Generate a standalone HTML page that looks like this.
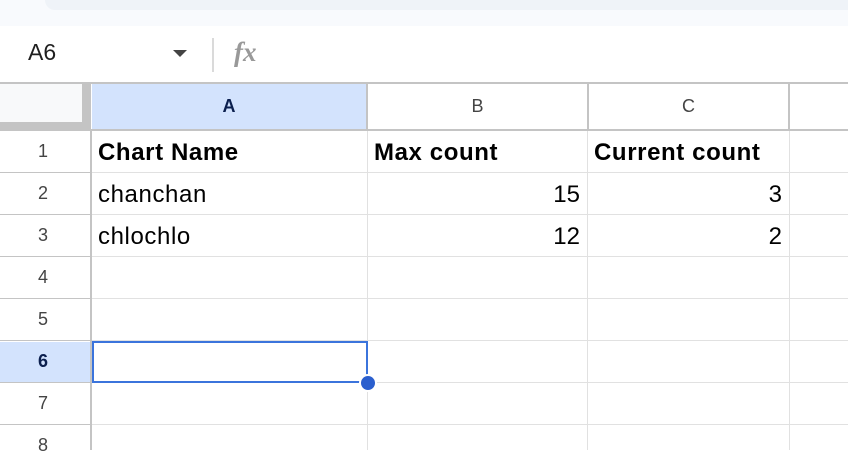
<!DOCTYPE html>
<html><head><style>
*{margin:0;padding:0;box-sizing:border-box}
body{width:848px;height:450px;overflow:hidden;background:#fff;font-family:"Liberation Sans",Arial,sans-serif;position:relative}
.a{position:absolute}
.vl{position:absolute;width:1px;background:#e1e1e1}
.hl{position:absolute;height:1px;background:#e1e1e1}
.rn{position:absolute;left:0;width:86px;text-align:center;font-size:18px;color:#444}
.ch{position:absolute;top:83px;height:47px;line-height:47px;text-align:center;font-size:18px;color:#444}
.t{position:absolute;font-size:24px;letter-spacing:0.6px;color:#000}
</style></head><body>
<div class="a" style="left:0;top:0;width:848px;height:26px;background:#f8fafd"></div>
<div class="a" style="left:45px;top:0;width:803px;height:10px;background:#eff3f8;border-bottom-left-radius:10px"></div>
<div class="a" style="left:28px;top:39px;font-size:23px;color:#1f1f1f">A6</div>
<div class="a" style="left:173px;top:50px;width:0;height:0;border-left:7px solid transparent;border-right:7px solid transparent;border-top:7px solid #444"></div>
<div class="a" style="left:212px;top:38px;width:2px;height:34px;background:#dadada"></div>
<div class="a" style="left:234px;top:37px;font-size:27px;font-style:italic;font-weight:bold;font-family:'Liberation Serif',serif;color:#999">fx</div>
<div class="hl" style="left:0;top:82px;width:848px;height:2px;background:#c4c4c4"></div>
<div class="a" style="left:0;top:84px;width:82px;height:38px;background:#f8f9fa"></div>
<div class="a" style="left:82px;top:84px;width:9px;height:46px;background:#c4c4c4"></div>
<div class="a" style="left:0;top:122px;width:91px;height:8px;background:#c4c4c4"></div>
<div class="a" style="left:92px;top:84px;width:275px;height:46px;background:#d3e3fd"></div>
<div class="hl" style="left:0;top:129px;width:848px;height:2px;background:#c4c4c4"></div>
<div class="vl" style="left:366px;top:84px;height:46px;width:2px;background:#c4c4c4"></div>
<div class="vl" style="left:587px;top:84px;height:46px;width:2px;background:#c4c4c4"></div>
<div class="vl" style="left:788px;top:84px;height:46px;width:2px;background:#c4c4c4"></div>
<div class="ch" style="left:92px;width:274px;color:#0b1f4e;font-weight:bold">A</div>
<div class="ch" style="left:368px;width:219px">B</div>
<div class="ch" style="left:589px;width:199px">C</div>
<div class="vl" style="left:90px;top:130px;height:320px;width:2px;background:#c4c4c4"></div>
<div class="vl" style="left:367px;top:131px;height:319px"></div>
<div class="vl" style="left:587px;top:131px;height:319px"></div>
<div class="vl" style="left:789px;top:131px;height:319px"></div>
<div class="a" style="left:0;top:342px;width:90px;height:40px;background:#d3e3fd"></div>
<div class="hl" style="left:92px;top:172px;width:756px"></div>
<div class="hl" style="left:92px;top:214px;width:756px"></div>
<div class="hl" style="left:92px;top:256px;width:756px"></div>
<div class="hl" style="left:92px;top:298px;width:756px"></div>
<div class="hl" style="left:92px;top:340px;width:756px"></div>
<div class="hl" style="left:92px;top:382px;width:756px"></div>
<div class="hl" style="left:92px;top:424px;width:756px"></div>
<div class="hl" style="left:0;top:172px;width:90px;background:#c4c4c4"></div>
<div class="hl" style="left:0;top:214px;width:90px;background:#c4c4c4"></div>
<div class="hl" style="left:0;top:256px;width:90px;background:#c4c4c4"></div>
<div class="hl" style="left:0;top:298px;width:90px;background:#c4c4c4"></div>
<div class="hl" style="left:0;top:340px;width:90px;background:#c4c4c4"></div>
<div class="hl" style="left:0;top:382px;width:90px;background:#c4c4c4"></div>
<div class="hl" style="left:0;top:424px;width:90px;background:#c4c4c4"></div>
<div class="rn" style="top:141px">1</div>
<div class="rn" style="top:183px">2</div>
<div class="rn" style="top:225px">3</div>
<div class="rn" style="top:267px">4</div>
<div class="rn" style="top:309px">5</div>
<div class="rn" style="top:351px;font-weight:bold;color:#0b1f4e">6</div>
<div class="rn" style="top:393px">7</div>
<div class="rn" style="top:435px">8</div>
<div class="t" style="left:98px;top:139px;font-weight:bold">Chart Name</div>
<div class="t" style="left:374px;top:139px;font-weight:bold">Max count</div>
<div class="t" style="left:594px;top:139px;font-weight:bold">Current count</div>
<div class="t" style="left:98px;top:181px">chanchan</div>
<div class="t" style="left:98px;top:223px">chlochlo</div>
<div class="t" style="left:480px;width:100px;text-align:right;top:181px;letter-spacing:0">15</div>
<div class="t" style="left:682px;width:100px;text-align:right;top:181px;letter-spacing:0">3</div>
<div class="t" style="left:480px;width:100px;text-align:right;top:223px;letter-spacing:0">12</div>
<div class="t" style="left:682px;width:100px;text-align:right;top:223px;letter-spacing:0">2</div>
<div class="a" style="left:92px;top:341px;width:276px;height:42px;border:2px solid #3b74dc"></div>
<div class="a" style="left:359px;top:374px;width:18px;height:18px;border-radius:50%;background:#2b5fce;border:2px solid #fff"></div>
</body></html>
